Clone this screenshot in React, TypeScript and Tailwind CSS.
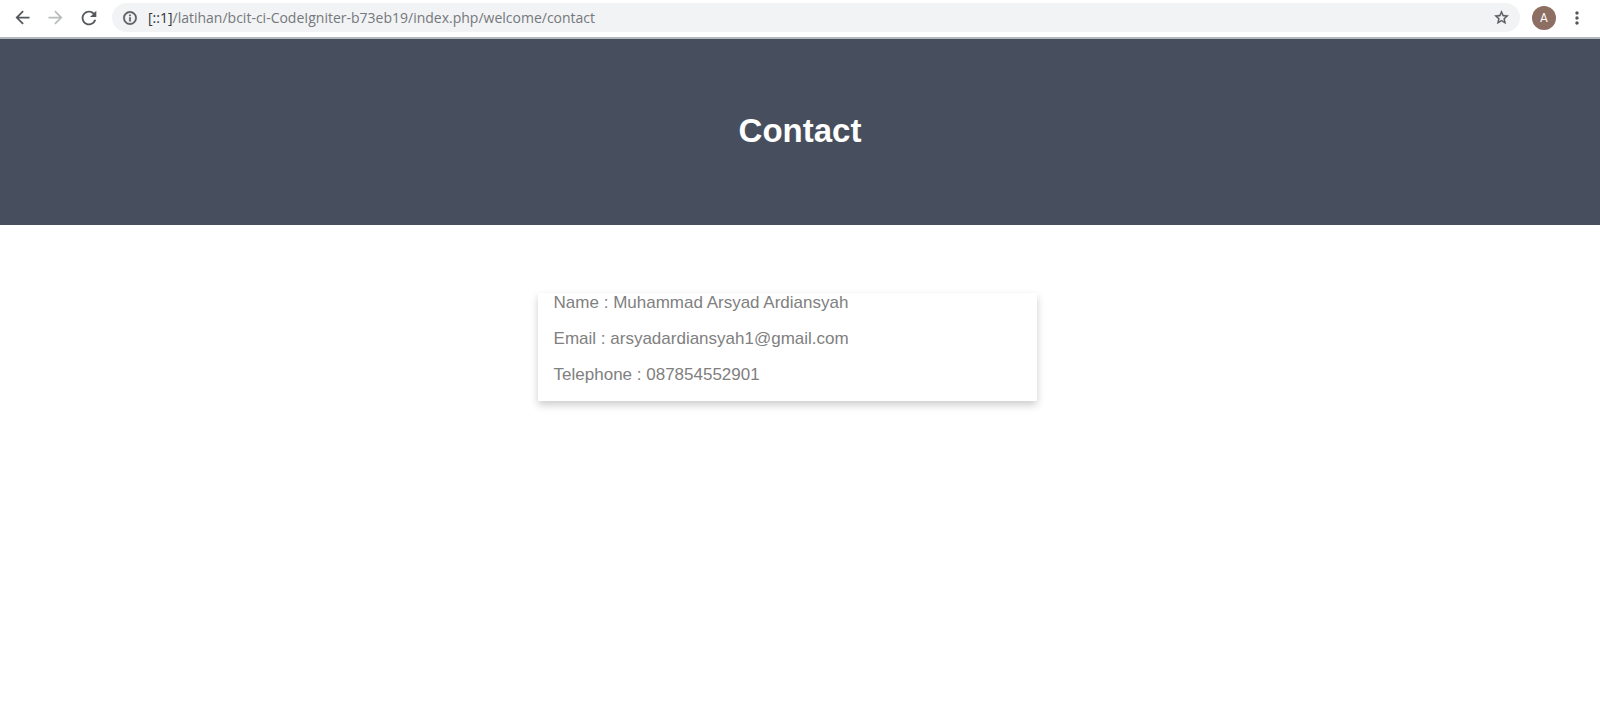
const details = [
  { label: "Name", value: "Muhammad Arsyad Ardiansyah" },
  { label: "Email", value: "arsyadardiansyah1@gmail.com" },
  { label: "Telephone", value: "087854552901" },
];

function Icon({ d, className }: { d: string; className: string }) {
  return (
    <svg viewBox="0 0 24 24" fill="currentColor" aria-hidden="true" className={className}>
      <path d={d} />
    </svg>
  );
}

function BrowserBar() {
  return (
    <div className="flex items-center border-b-2 border-[#b4b8bd] bg-white pt-[3px] pb-[5px] pl-3 pr-[14px] text-[#54575b]">
      <button type="button" aria-label="Back" className="mr-3 flex size-[21px] items-center justify-center">
        <Icon className="size-[21px]" d="M20 11H7.83l5.59-5.59L12 4l-8 8 8 8 1.41-1.41L7.83 13H20v-2z" />
      </button>
      <button type="button" aria-label="Forward" className="mr-3 flex size-[21px] items-center justify-center text-[#babcbe]">
        <Icon className="size-[21px]" d="M12 4l-1.41 1.41L16.17 11H4v2h12.17l-5.58 5.59L12 20l8-8z" />
      </button>
      <button type="button" aria-label="Reload" className="mr-3 flex size-[22px] items-center justify-center">
        <Icon
          className="size-[22px]"
          d="M17.65 6.35C16.2 4.9 14.21 4 12 4c-4.42 0-7.99 3.58-7.99 8s3.57 8 7.99 8c3.73 0 6.84-2.55 7.73-6h-2.08c-.82 2.33-3.04 4-5.65 4-3.31 0-6-2.69-6-6s2.69-6 6-6c1.66 0 3.14.69 4.22 1.78L13 11h7V4l-2.35 2.35z"
        />
      </button>
      <div className="flex h-[29px] min-w-0 flex-1 items-center rounded-full bg-[#f1f3f4] pl-[10px] pr-[10px]">
        <Icon
          className="size-4 shrink-0 stroke-current stroke-[0.6]"
          d="M11 7h2v2h-2zm0 4h2v6h-2zm1-9C6.48 2 2 6.48 2 12s4.48 10 10 10 10-4.48 10-10S17.52 2 12 2zm0 18c-4.41 0-8-3.59-8-8s3.59-8 8-8 8 3.59 8 8-3.59 8-8 8z"
        />
        <div className="ml-[10px] min-w-0 flex-1 truncate font-['Open_Sans','Noto_Sans',sans-serif] text-[14px] leading-5 text-[#75787c]">
          <span className="text-[#303236]">[::1]</span>/latihan/bcit-ci-CodeIgniter-b73eb19/index.php/welcome/contact
        </div>
        <button type="button" aria-label="Bookmark this page" className="shrink-0">
          <Icon
            className="size-[17px] stroke-current stroke-[0.4]"
            d="M22 9.24l-7.19-.62L12 2 9.19 8.63 2 9.24l5.46 4.73L5.82 21 12 17.27 18.18 21l-1.63-7.03L22 9.24zM12 15.4l-3.76 2.27 1-4.28-3.32-2.88 4.38-.38L12 6.1l1.71 4.04 4.38.38-3.32 2.88 1 4.28L12 15.4z"
          />
        </button>
      </div>
      <button
        type="button"
        aria-label="Profile"
        className="ml-3 flex size-6 items-center justify-center rounded-full bg-[#8d6e63] font-[Roboto,sans-serif] text-[12px] leading-none text-white"
      >
        A
      </button>
      <button type="button" aria-label="Menu" className="ml-3 flex size-[18px] items-center justify-center">
        <Icon
          className="size-[20px] shrink-0"
          d="M12 8c1.1 0 2-.9 2-2s-.9-2-2-2-2 .9-2 2 .9 2 2 2zm0 2c-1.1 0-2 .9-2 2s.9 2 2 2 2-.9 2-2-.9-2-2-2zm0 6c-1.1 0-2 .9-2 2s.9 2 2 2 2-.9 2-2-.9-2-2-2z"
        />
      </button>
    </div>
  );
}

export default function App() {
  return (
    <div className="min-h-screen bg-white font-['Liberation_Sans',Arial,sans-serif]">
      <BrowserBar />
      <header className="bg-[#474e5d] pt-[72px] pb-[74px] text-center text-white">
        <h1 className="text-[33px] font-bold leading-10">Contact</h1>
      </header>
      <main className="pt-[68px]">
        <section className="ml-[33.6%] w-[31.2%] px-4 pb-4 shadow-[0_4px_8px_0_rgba(0,0,0,0.2)]">
          <div className="flex flex-col gap-4 text-[17px] leading-5 text-[#808080]">
            {details.map((item) => (
              <p key={item.label}>
                {item.label} : {item.value}
              </p>
            ))}
          </div>
        </section>
      </main>
    </div>
  );
}
